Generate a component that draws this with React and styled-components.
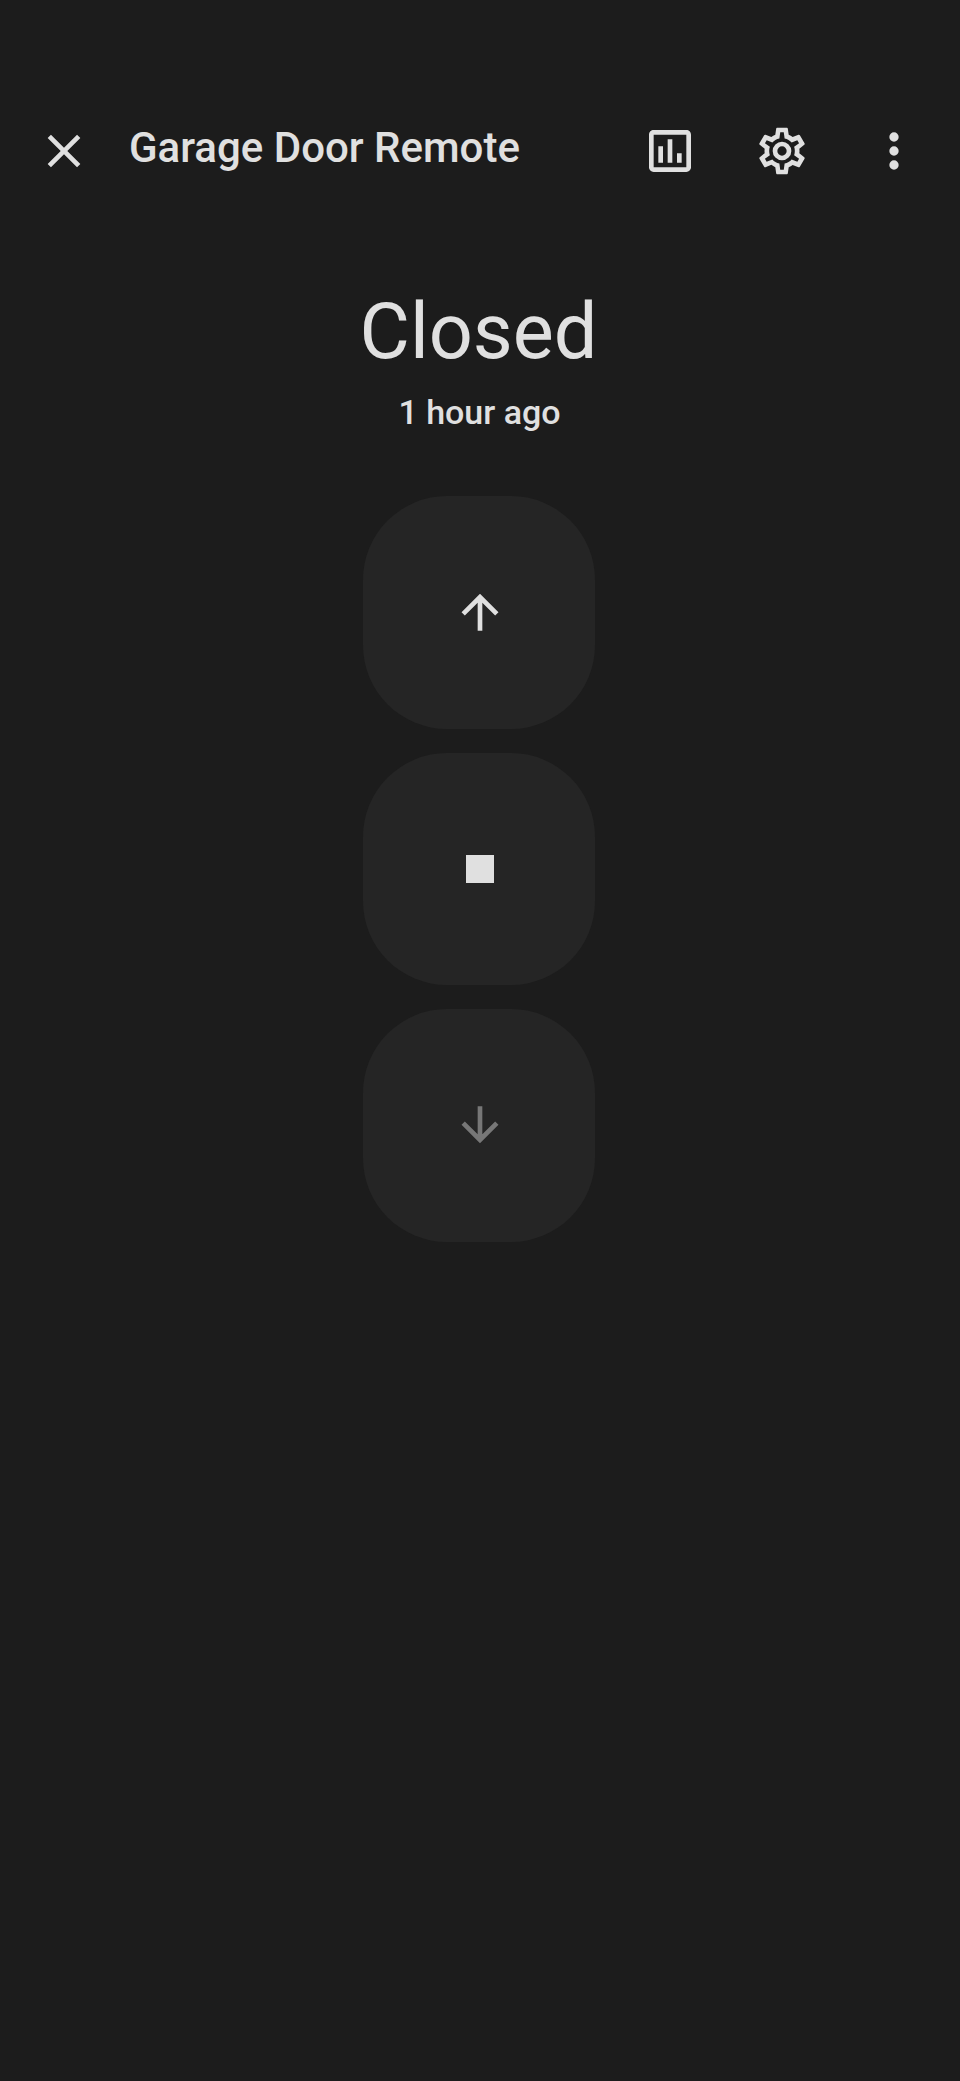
import React from "react";
import styled, { createGlobalStyle } from "styled-components";

const Global = createGlobalStyle`
  html, body { margin: 0; padding: 0; background: #1c1c1c; }
  body { font-family: Roboto, "Noto Sans", sans-serif; color: #e0e0e0; }
`;

const Page = styled.div`
  width: 960px;
  height: 2081px;
  background: #1c1c1c;
  padding-top: 95px;
  box-sizing: border-box;
  overflow: hidden;
`;

const Toolbar = styled.header`
  display: flex;
  align-items: center;
  height: 112px;
  padding: 0 10px 0 8px;
`;

const IconButton = styled.button`
  width: 112px;
  height: 112px;
  flex: none;
  display: flex;
  align-items: center;
  justify-content: center;
  padding: 0;
  border: none;
  background: none;
  color: #e0e0e0;
`;

const Title = styled.h1`
  flex: 1;
  margin: -7px 0 0 9px;
  font-size: 42px;
  line-height: 48px;
  font-weight: 500;
  color: #e0e0e0;
  white-space: nowrap;
`;

const Status = styled.section`
  display: flex;
  flex-direction: column;
  align-items: center;
  margin-top: 81px;
  padding-right: 1px;
`;

const StateText = styled.div`
  margin-right: 2px;
  font-size: 77.4px;
  line-height: 88px;
  font-weight: 400;
  color: #e0e0e0;
`;

const Changed = styled.div`
  margin-top: 16px;
  font-size: 34px;
  line-height: 40px;
  font-weight: 500;
  color: #e0e0e0;
`;

const Controls = styled.div`
  display: flex;
  flex-direction: column;
  align-items: center;
  gap: 24px;
  margin-top: 64px;
  padding-right: 2px;
`;

const Control = styled.button`
  width: 232px;
  height: 232.5px;
  display: flex;
  align-items: center;
  justify-content: center;
  padding: 0 0 0 1px;
  border: none;
  border-radius: 84px;
  background: #252525;
  color: ${(p) => (p.$disabled ? "#777777" : "#e0e0e0")};
`;

const Icon = ({ d, size = 56 }) => (
  <svg width={size} height={size} viewBox="0 0 24 24" fill="currentColor" aria-hidden="true">
    <path d={d} />
  </svg>
);

const paths = {
  close: "M19,6.41L17.59,5L12,10.59L6.41,5L5,6.41L10.59,12L5,17.59L6.41,19L12,13.41L17.59,19L19,17.59L13.41,12L19,6.41Z",
  chart: "M9 17H7V10H9V17M13 17H11V7H13V17M17 17H15V13H17V17M19 19H5V5H19V19.1M19 3H5C3.9 3 3 3.9 3 5V19C3 20.1 3.9 21 5 21H19C20.1 21 21 20.1 21 19V5C21 3.9 20.1 3 19 3Z",
  cog: "M12,8A4,4 0 0,1 16,12A4,4 0 0,1 12,16A4,4 0 0,1 8,12A4,4 0 0,1 12,8M12,10A2,2 0 0,0 10,12A2,2 0 0,0 12,14A2,2 0 0,0 14,12A2,2 0 0,0 12,10M10,22C9.75,22 9.54,21.82 9.5,21.58L9.13,18.93C8.5,18.68 7.96,18.34 7.44,17.94L4.95,18.95C4.73,19.03 4.46,18.95 4.34,18.73L2.34,15.27C2.21,15.05 2.27,14.78 2.46,14.63L4.57,12.97L4.5,12L4.57,11L2.46,9.37C2.27,9.22 2.21,8.95 2.34,8.73L4.34,5.27C4.46,5.05 4.73,4.96 4.95,5.05L7.44,6.05C7.96,5.66 8.5,5.32 9.13,5.07L9.5,2.42C9.54,2.18 9.75,2 10,2H14C14.25,2 14.46,2.18 14.5,2.42L14.87,5.07C15.5,5.32 16.04,5.66 16.56,6.05L19.05,5.05C19.27,4.96 19.54,5.05 19.66,5.27L21.66,8.73C21.79,8.95 21.73,9.22 21.54,9.37L19.43,11L19.5,12L19.43,13L21.54,14.63C21.73,14.78 21.79,15.05 21.66,15.27L19.66,18.73C19.54,18.95 19.27,19.04 19.05,18.95L16.56,17.95C16.04,18.34 15.5,18.68 14.87,18.93L14.5,21.58C14.46,21.82 14.25,22 14,22H10M11.25,4L10.88,6.61C9.68,6.86 8.62,7.5 7.85,8.39L5.44,7.35L4.69,8.65L6.8,10.2C6.4,11.37 6.4,12.64 6.8,13.8L4.68,15.36L5.43,16.66L7.86,15.62C8.63,16.5 9.68,17.14 10.87,17.38L11.24,20H12.76L13.13,17.39C14.32,17.14 15.37,16.5 16.14,15.62L18.57,16.66L19.32,15.36L17.2,13.81C17.6,12.64 17.6,11.37 17.2,10.2L19.31,8.65L18.56,7.35L16.15,8.39C15.38,7.5 14.32,6.86 13.12,6.62L12.75,4H11.25Z",
  dots: "M12,16A2,2 0 0,1 14,18A2,2 0 0,1 12,20A2,2 0 0,1 10,18A2,2 0 0,1 12,16M12,10A2,2 0 0,1 14,12A2,2 0 0,1 12,14A2,2 0 0,1 10,12A2,2 0 0,1 12,10M12,4A2,2 0 0,1 14,6A2,2 0 0,1 12,8A2,2 0 0,1 10,6A2,2 0 0,1 12,4Z",
  up: "M13,20H11V8L5.5,13.5L4.08,12.08L12,4.16L19.92,12.08L18.5,13.5L13,8V20Z",
  stop: "M18,18H6V6H18V18Z",
  down: "M11,4H13V16L18.5,10.5L19.92,11.92L12,19.84L4.08,11.92L5.5,10.5L11,16V4Z",
};

export default function App() {
  return (
    <>
      <Global />
      <Page>
        <Toolbar>
          <IconButton aria-label="Close"><Icon d={paths.close} /></IconButton>
          <Title>Garage Door Remote</Title>
          <IconButton aria-label="History"><Icon d={paths.chart} /></IconButton>
          <IconButton aria-label="Settings"><Icon d={paths.cog} /></IconButton>
          <IconButton aria-label="More"><Icon d={paths.dots} /></IconButton>
        </Toolbar>
        <Status>
          <StateText>Closed</StateText>
          <Changed>1 hour ago</Changed>
        </Status>
        <Controls>
          <Control aria-label="Open"><Icon d={paths.up} /></Control>
          <Control aria-label="Stop"><Icon d={paths.stop} /></Control>
          <Control aria-label="Close cover" $disabled><Icon d={paths.down} /></Control>
        </Controls>
      </Page>
    </>
  );
}
